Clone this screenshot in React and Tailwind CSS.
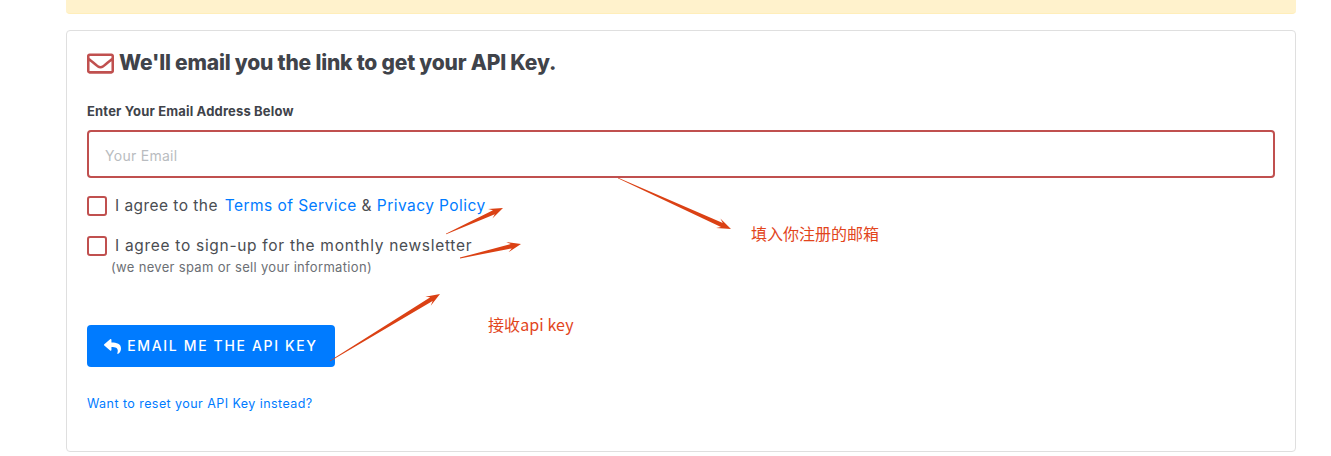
import { FaRegEnvelope, FaReply } from 'react-icons/fa';

const FONT = "font-['Inter','Noto_Sans_CJK_SC',sans-serif]";

// hand drawn annotation arrows, page coordinates
const ARROWS = [
  { from: [618, 178], to: [731, 229] },
  { from: [446, 234], to: [503, 208] },
  { from: [460, 258], to: [521, 244] },
  { from: [330, 361], to: [440, 294] },
];

function arrowPoints({ from, to }) {
  const dx = to[0] - from[0];
  const dy = to[1] - from[1];
  const len = Math.hypot(dx, dy);
  const ux = dx / len;
  const uy = dy / len;
  const at = (along, side) => `${to[0] - ux * along - uy * side},${to[1] - uy * along + ux * side}`;
  return [
    at(len, 0.4),
    at(10, 2.2),
    at(14, 5.2),
    `${to[0]},${to[1]}`,
    at(14, -5.2),
    at(10, -2.2),
    at(len, -0.4),
  ].join(' ');
}

function Checkbox() {
  return <span className="w-5 h-5 shrink-0 rounded-[3px] border-2 border-[#c0504f] bg-white" />;
}

export default function App() {
  return (
    <div className={`relative w-[1331px] h-[456px] overflow-hidden bg-white pl-[66px] pr-[35px] ${FONT}`}>
      <div className="h-[14px] rounded-b-[4px] bg-[#fff2cc] border-b border-[#ffeeba]" />

      <div className="mt-4 h-[422px] rounded-[4px] border border-[#dfdfdf] pl-5 pr-5 pt-[18px]">
        <h2 className="flex items-center gap-[5px] h-7 text-[21px] font-extrabold tracking-[-0.2px] text-[#40434a]">
          <FaRegEnvelope className="w-[27px] h-[27px] text-[#c0504f]" />
          We'll email you the link to get your API Key.
        </h2>

        <label className="block mt-[25px] h-[18px] leading-[18px] text-[13px] font-bold tracking-[0.17px] text-[#40434a]">
          Enter Your Email Address Below
        </label>

        <div className="mt-[10px] flex items-center h-12 rounded-[4px] border-2 border-[#c0504f] px-4 pt-[3px] text-sm tracking-[0.02em] text-[#b9bcc0]">
          Your Email
        </div>

        <div className="mt-[18px] flex items-center gap-2 h-5 text-[15.5px] tracking-[0.45px] text-[#4a4d52]">
          <Checkbox />
          <span>
            I agree to the <a className="ml-[2px] text-[#007bff]">Terms of Service</a> &amp;{' '}
            <a className="text-[#007bff]">Privacy Policy</a>
          </span>
        </div>

        <div className="mt-5 flex items-center gap-2 h-5 text-[15.5px] tracking-[0.7px] text-[#4a4d52]">
          <Checkbox />
          <span>I agree to sign-up for the monthly newsletter</span>
        </div>

        <p className="mt-[2px] ml-6 h-[18px] leading-[18px] text-[13px] tracking-[0.32px] text-[#6c6f75]">
          (we never spam or sell your information)
        </p>

        <button className="mt-[49px] flex items-center justify-center gap-[6px] w-[248px] h-[42px] rounded-[4px] bg-[#007bff] text-sm font-medium tracking-[1.65px] text-white">
          <FaReply className="w-[17px] h-[17px]" />
          EMAIL ME THE API KEY
        </button>

        <a className="block mt-7 h-[18px] leading-[18px] text-[12.5px] tracking-[0.44px] text-[#007bff]">
          Want to reset your API Key instead?
        </a>
      </div>

      <svg className="absolute left-0 top-0" width="1331" height="456">
        {ARROWS.map((a, i) => (
          <polygon key={i} points={arrowPoints(a)} fill="#db4114" />
        ))}
      </svg>

      <span className="absolute left-[751px] top-[222px] text-base leading-[22px] text-[#e2451c] font-['Noto_Sans_CJK_SC',sans-serif]">
        填入你注册的邮箱
      </span>
      <span className="absolute left-[488px] top-[313px] text-base tracking-[0.1px] leading-[22px] text-[#e2451c] font-['Noto_Sans_CJK_SC',sans-serif]">
        接收api key
      </span>
    </div>
  );
}
